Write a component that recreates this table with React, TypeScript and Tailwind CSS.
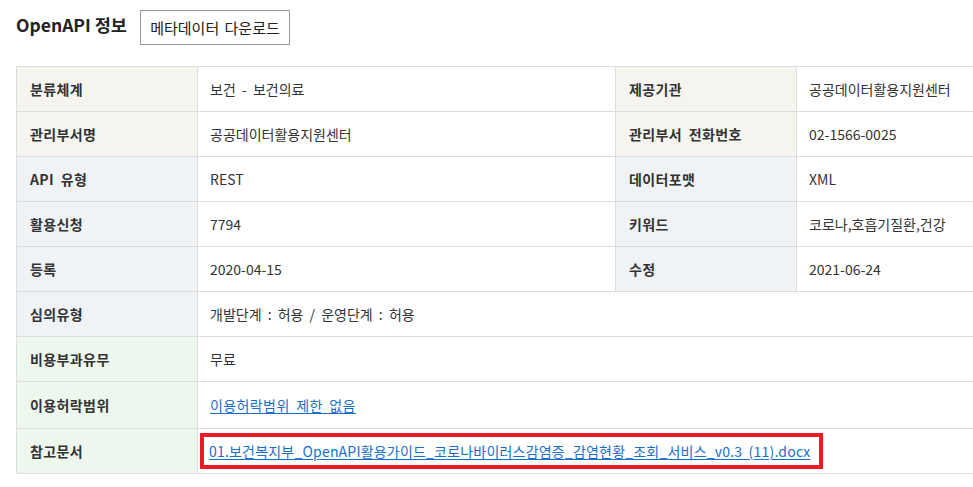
import React from 'react';

type Cell = { label: string; value: React.ReactNode };
type Row = { bg: string; cells: Cell[] };

const BEIGE = 'bg-[#f5f4ef]';
const BLUE = 'bg-[#eff3f6]';
const GREEN = 'bg-[#edf7ed]';

const rows: Row[] = [
    {
        bg: BEIGE,
        cells: [
            { label: '분류체계', value: '보건 - 보건의료' },
            { label: '제공기관', value: '공공데이터활용지원센터' },
        ],
    },
    {
        bg: BEIGE,
        cells: [
            { label: '관리부서명', value: '공공데이터활용지원센터' },
            { label: '관리부서 전화번호', value: '02-1566-0025' },
        ],
    },
    {
        bg: BLUE,
        cells: [
            { label: 'API 유형', value: 'REST' },
            { label: '데이터포맷', value: 'XML' },
        ],
    },
    {
        bg: BLUE,
        cells: [
            { label: '활용신청', value: '7794' },
            { label: '키워드', value: '코로나,호흡기질환,건강' },
        ],
    },
    {
        bg: BLUE,
        cells: [
            { label: '등록', value: '2020-04-15' },
            { label: '수정', value: '2021-06-24' },
        ],
    },
    {
        bg: BLUE,
        cells: [{ label: '심의유형', value: '개발단계 : 허용 / 운영단계 : 허용' }],
    },
];

const thCls = 'border border-[#dddddd] pl-[13px] text-left font-bold text-[#333] tracking-[0.4px] [word-spacing:3px]';
const tdCls = 'border border-[#dddddd] pl-[12px] text-[#333] whitespace-nowrap [word-spacing:3px]';

export default function App() {
    return (
        <div
            className="w-[973px] h-[487px] overflow-hidden bg-white text-[#333]"
            style={{ fontFamily: '"Noto Sans CJK KR", "Noto Sans", sans-serif' }}
        >
            <div className="flex items-center pl-4 pt-[10px]">
                <h2 className="text-[17.5px] font-bold leading-[30px] text-[#222] -mt-[5px]">OpenAPI 정보</h2>
                <button className="ml-[13px] h-[35px] w-[150px] border border-[#999] bg-white text-[15px] text-[#222] leading-none [word-spacing:2px]">
                    메타데이터 다운로드
                </button>
            </div>

            <table className="mt-[21px] ml-4 w-[1000px] border-collapse table-fixed text-[14px] leading-[20px]">
                <colgroup>
                    <col className="w-[181px]" />
                    <col className="w-[418px]" />
                    <col className="w-[181px]" />
                    <col className="w-[220px]" />
                </colgroup>
                <tbody>
                    {rows.map((row, i) => (
                        <tr key={i} className="h-[45px]">
                            {row.cells.map((c, j) => (
                                <React.Fragment key={j}>
                                    <th className={`${row.bg} ${thCls}`}>{c.label}</th>
                                    <td colSpan={row.cells.length === 1 ? 3 : 1} className={tdCls}>
                                        {c.value}
                                    </td>
                                </React.Fragment>
                            ))}
                        </tr>
                    ))}
                    <tr className="h-[45px]">
                        <th className={`${GREEN} ${thCls}`}>비용부과유무</th>
                        <td colSpan={3} className={tdCls}>무료</td>
                    </tr>
                    <tr className="h-[47px]">
                        <th className={`${GREEN} ${thCls}`}>이용허락범위</th>
                        <td colSpan={3} className={tdCls}>
                            <a href="#" className="text-[#1a6ec9] underline underline-offset-2 tracking-[0.4px]">
                                이용허락범위 제한 없음
                            </a>
                        </td>
                    </tr>
                    <tr className="h-[45px]">
                        <th className={`${GREEN} ${thCls}`}>참고문서</th>
                        <td colSpan={3} className="border border-[#dddddd] pl-[2px]">
                            <span className="inline-flex items-center h-[36px] w-[623px] border-[4px] border-[#ed1c24] pl-[5px] whitespace-nowrap">
                                <a href="#" className="text-[#1a6ec9] underline underline-offset-2 tracking-[0.2px] [word-spacing:3px]">
                                    01.보건복지부_OpenAPI활용가이드_코로나바이러스감염증_감염현황_조회_서비스_v0.3 (11).docx
                                </a>
                            </span>
                        </td>
                    </tr>
                </tbody>
            </table>
        </div>
    );
}
